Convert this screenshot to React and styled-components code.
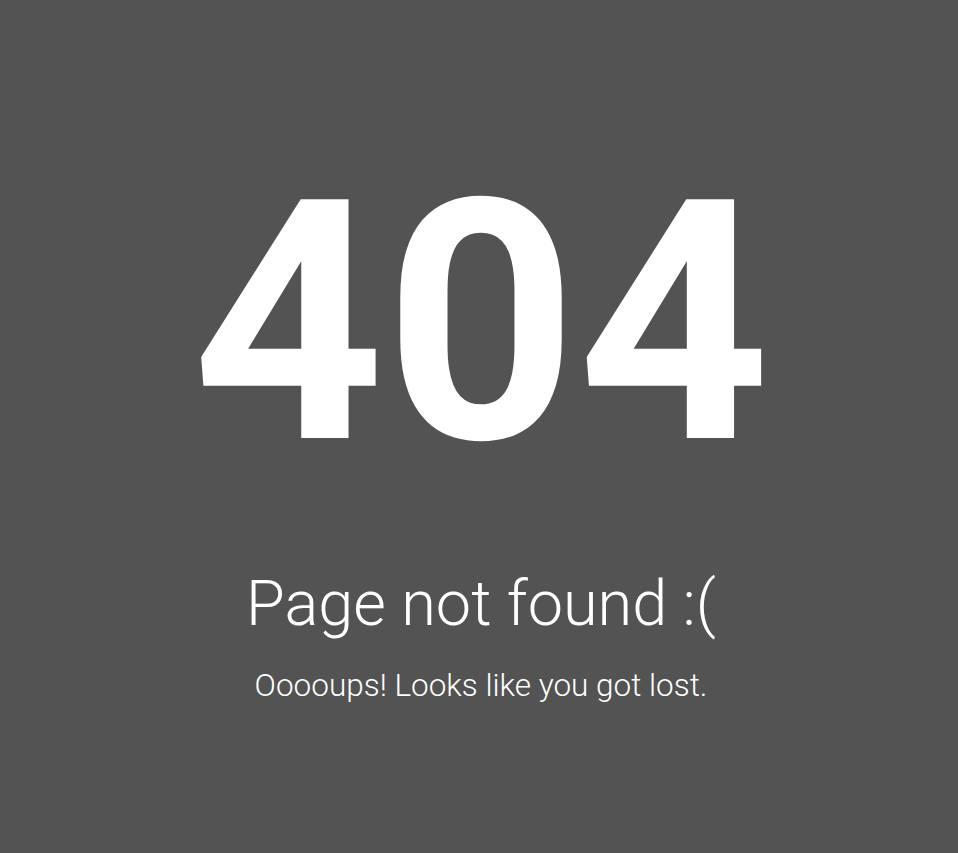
import React from 'react'
import styled, { createGlobalStyle } from 'styled-components'

const GlobalStyle = createGlobalStyle`
  html, body {
    margin: 0;
    padding: 0;
    background: #535353;
  }
  body {
    font-family: Roboto, "Noto Sans", sans-serif;
    color: #fff;
  }
`

const Page = styled.main`
  min-height: 853px;
  display: flex;
  flex-direction: column;
  align-items: center;
  padding-top: 155px;
  padding-left: 4px;
  box-sizing: border-box;
`

const Code = styled.h1`
  margin: 0;
  font-size: 336px;
  font-weight: 700;
  line-height: 1;
`

const Title = styled.h2`
  margin: 81px 0 0;
  font-size: 63px;
  font-weight: 300;
  line-height: 1;
`

const Message = styled.p`
  margin: 35px 0 0;
  font-size: 31.5px;
  font-weight: 300;
  line-height: 1;
`

const App = () =>
  <>
    <GlobalStyle />
    <Page>
      <Code>404</Code>
      <Title>Page not found :(</Title>
      <Message>Ooooups! Looks like you got lost.</Message>
    </Page>
  </>

export default App
